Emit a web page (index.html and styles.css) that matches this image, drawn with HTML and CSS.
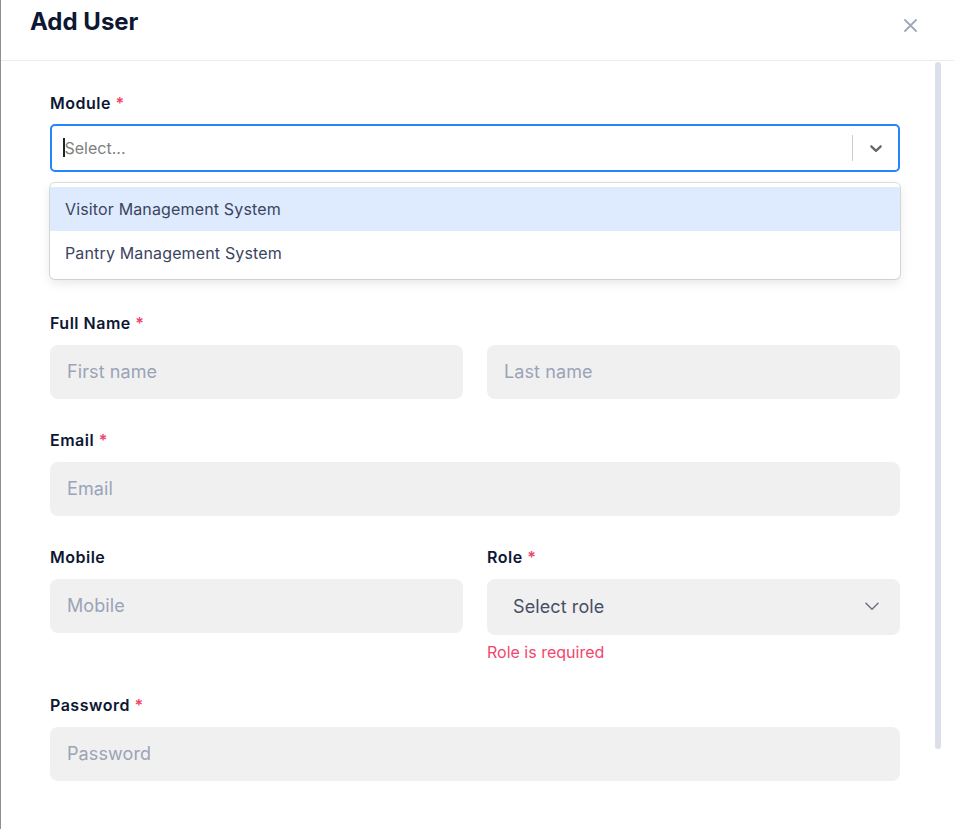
FILE: index.html
```html
<!DOCTYPE html>
<html lang="en">
<head>
<meta charset="utf-8">
<title>Add User</title>
<link rel="stylesheet" href="styles.css">
</head>
<body>
<div class="modal">
  <header class="modal-header">
    <h1 class="modal-title">Add User</h1>
    <button class="close-btn" aria-label="Close">
      <svg width="13" height="13" viewBox="0 0 13 13"><path d="M1 1L12 12M12 1L1 12" stroke="#a2a8ba" stroke-width="1.8" stroke-linecap="round"/></svg>
    </button>
  </header>
  <div class="modal-body">
    <form class="form">
      <div class="field field-module">
        <label class="label">Module <span class="req">*</span></label>
        <div class="rs">
          <div class="rs-control">
            <div class="rs-value"><span class="rs-cursor"></span><span class="rs-placeholder">Select...</span></div>
            <span class="rs-sep"></span>
            <span class="rs-indicator">
              <svg width="20" height="20" viewBox="0 0 20 20"><path fill="#666" d="M4.516 7.548c0.436-0.446 1.043-0.481 1.576 0l3.908 3.747 3.908-3.747c0.533-0.481 1.141-0.446 1.574 0 0.436 0.445 0.408 1.197 0 1.615-0.406 0.418-4.695 4.502-4.695 4.502-0.217 0.223-0.502 0.335-0.787 0.335s-0.57-0.112-0.789-0.335c0 0-4.287-4.084-4.695-4.502s-0.436-1.170 0-1.615z"/></svg>
            </span>
          </div>
          <div class="rs-menu">
            <div class="rs-option rs-option-focused">Visitor Management System</div>
            <div class="rs-option">Pantry Management System</div>
          </div>
        </div>
      </div>

      <div class="field">
        <label class="label">Full Name <span class="req">*</span></label>
        <div class="row">
          <input class="input" placeholder="First name">
          <input class="input" placeholder="Last name">
        </div>
      </div>

      <div class="field">
        <label class="label">Email <span class="req">*</span></label>
        <input class="input" placeholder="Email">
      </div>

      <div class="row">
        <div class="field">
          <label class="label">Mobile</label>
          <input class="input" placeholder="Mobile">
        </div>
        <div class="field">
          <label class="label">Role <span class="req">*</span></label>
          <div class="select">
            <span class="select-text">Select role</span>
            <svg width="14" height="9" viewBox="0 0 14 9"><path d="M1 1.2L7 7.2L13 1.2" fill="none" stroke="#6b7385" stroke-width="1.5" stroke-linecap="round" stroke-linejoin="round"/></svg>
          </div>
          <div class="error">Role is required</div>
        </div>
      </div>

      <div class="field">
        <label class="label">Password <span class="req">*</span></label>
        <input class="input" type="password" placeholder="Password">
      </div>
    </form>
  </div>
  <div class="scrollbar"></div>
</div>
</body>
</html>
```
FILE: styles.css
```css
* { box-sizing: border-box; }
html, body { margin: 0; padding: 0; }
body {
  width: 954px;
  height: 829px;
  overflow: hidden;
  background: #ffffff;
  font-family: Inter, "Noto Sans", sans-serif;
}
.modal {
  position: relative;
  height: 829px;
  border-left: 1px solid #8d8f93;
  background: #fff;
}
.modal-header {
  height: 61px;
  border-bottom: 1px solid #ececec;
  display: flex;
  justify-content: space-between;
  align-items: flex-start;
  padding: 6px 37px 0 29px;
}
.modal-title {
  margin: 0;
  font-size: 24px;
  line-height: 32px;
  font-weight: 700;
  color: #0d1733;
}
.close-btn {
  border: 0;
  background: none;
  padding: 0;
  margin-top: 13px;
  width: 13px;
  height: 13px;
  display: block;
}
.close-btn svg { display: block; }
.modal-body {
  padding: 29.5px 54px 0 49px;
}
.form {
  display: flex;
  flex-direction: column;
  gap: 29.5px;
}
.field { display: flex; flex-direction: column; }
.field-module { margin-bottom: 110px; }
.label {
  font-size: 16px;
  line-height: 24px;
  font-weight: 600;
  letter-spacing: 0.5px;
  color: #0d1733;
  margin-bottom: 9.5px;
}
.field-module .label { margin-bottom: 9px; }
.req { color: #f0436a; }
.row {
  display: grid;
  grid-template-columns: 1fr 1fr;
  gap: 24px;
  align-items: start;
}
.input {
  height: 54px;
  width: 100%;
  border: 0;
  border-radius: 8px;
  background: #f0f0f0;
  padding: 0 17px;
  font-family: Inter, "Noto Sans", sans-serif;
  font-size: 18px;
  letter-spacing: 0.1px;
  color: #1f2937;
  outline: none;
}
.input::placeholder { color: #9ba3b8; }

/* react-select like */
.rs { position: relative; }
.rs-control {
  height: 48px;
  border: 2px solid #2684ff;
  border-radius: 5px;
  display: flex;
  align-items: center;
  background: #fff;
}
.rs-value {
  flex: 1;
  display: flex;
  align-items: center;
  padding-left: 11px;
  font-size: 16px;
  color: #808080;
}
.rs-cursor {
  width: 1.5px;
  height: 19px;
  background: #222;
}
.rs-placeholder { line-height: 24px; }
.rs-sep {
  width: 1px;
  height: 26px;
  background: #cccccc;
}
.rs-indicator {
  width: 45px;
  display: flex;
  justify-content: center;
  align-items: center;
  padding-left: 1px;
}
.rs-indicator svg { display: block; }
.rs-menu {
  position: absolute;
  left: 0;
  right: 0;
  top: calc(100% + 11px);
  background: #fff;
  border-radius: 5px;
  box-shadow: 0 0 0 1px rgba(0,0,0,0.12), 0 4px 11px rgba(0,0,0,0.1);
  padding: 4px 0;
  z-index: 2;
}
.rs-option {
  height: 44px;
  padding: 0 15px;
  display: flex;
  align-items: center;
  font-size: 16px;
  letter-spacing: 0.15px;
  color: #3a4460;
}
.rs-option-focused { background: #deebff; }

.select {
  height: 56px;
  border-radius: 8px;
  background: #f0f0f0;
  display: flex;
  align-items: center;
  justify-content: space-between;
  padding: 0 21px 0 26px;
}
.select-text {
  font-size: 18px;
  letter-spacing: 0.1px;
  color: #474f68;
}
.select svg { display: block; }
.error {
  margin-top: 5px;
  font-size: 16px;
  line-height: 24px;
  color: #f2466d;
}
.scrollbar {
  position: absolute;
  left: 934px;
  top: 62px;
  width: 6px;
  height: 687px;
  border-radius: 3px;
  background: #dbdfe9;
}
```
